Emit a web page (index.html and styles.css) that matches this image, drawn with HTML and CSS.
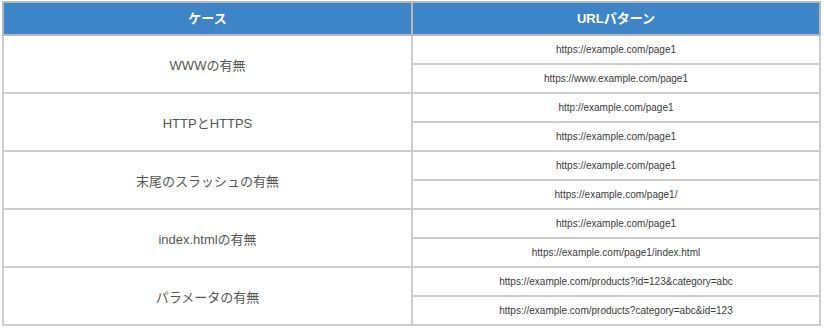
FILE: index.html
```html
<!DOCTYPE html>
<html lang="ja">
<head>
<meta charset="utf-8">
<link rel="stylesheet" href="styles.css">
</head>
<body>
<table class="cmp">
  <colgroup><col class="c1"><col class="c2"></colgroup>
  <thead>
    <tr><th>ケース</th><th>URLパターン</th></tr>
  </thead>
  <tbody>
    <tr><td rowspan="2" class="case">WWWの有無</td><td class="url">https://example.com/page1</td></tr>
    <tr><td class="url">https://www.example.com/page1</td></tr>
    <tr><td rowspan="2" class="case">HTTPとHTTPS</td><td class="url">http://example.com/page1</td></tr>
    <tr><td class="url">https://example.com/page1</td></tr>
    <tr><td rowspan="2" class="case">末尾のスラッシュの有無</td><td class="url">https://example.com/page1</td></tr>
    <tr><td class="url">https://example.com/page1/</td></tr>
    <tr><td rowspan="2" class="case">index.htmlの有無</td><td class="url">https://example.com/page1</td></tr>
    <tr><td class="url">https://example.com/page1/index.html</td></tr>
    <tr><td rowspan="2" class="case">パラメータの有無</td><td class="url">https://example.com/products?id=123&amp;category=abc</td></tr>
    <tr><td class="url">https://example.com/products?category=abc&amp;id=123</td></tr>
  </tbody>
</table>
</body>
</html>
```
FILE: styles.css
```css
html, body {
  margin: 0;
  padding: 0;
  background: #fff;
}
body {
  padding: 1px 2px;
  font-family: "Liberation Sans", Arial, "Noto Sans CJK JP", sans-serif;
}
.cmp {
  width: 819px;
  border-collapse: collapse;
  table-layout: fixed;
}
.c1 { width: 409px; }
.cmp th, .cmp td {
  border: 2px solid #cdcdcd;
  text-align: center;
  padding: 0;
}
.cmp th {
  background: #3d85c6;
  color: #fff;
  font-weight: bold;
  font-size: 13px;
  height: 29px;
  padding-bottom: 2px;
  border-color: #b8b8b8;
}
.case {
  color: #555;
  font-size: 13px;
}
.url {
  color: #3a3a3a;
  font-size: 10px;
  height: 27px;
}
```
